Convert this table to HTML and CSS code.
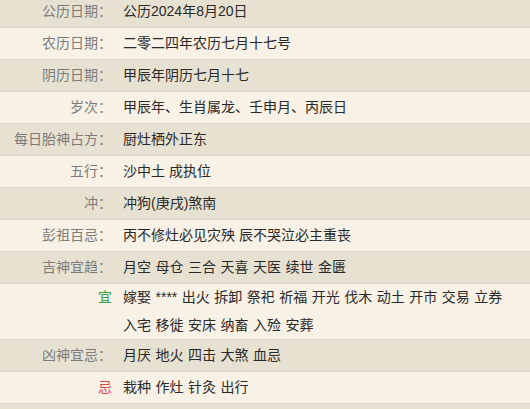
FILE: index.html
```html
<!DOCTYPE html>
<html lang="zh-CN">
<head>
<meta charset="utf-8">
<title>黄历</title>
<link rel="stylesheet" href="styles.css">
</head>
<body>
<div class="almanac">
  <div class="row dark"><div class="label">公历日期：</div><div class="value">公历2024年8月20日</div></div>
  <div class="row light"><div class="label">农历日期：</div><div class="value">二零二四年农历七月十七号</div></div>
  <div class="row dark"><div class="label">阴历日期：</div><div class="value">甲辰年阴历七月十七</div></div>
  <div class="row light"><div class="label">岁次：</div><div class="value">甲辰年、生肖属龙、壬申月、丙辰日</div></div>
  <div class="row dark"><div class="label">每日胎神占方：</div><div class="value">厨灶栖外正东</div></div>
  <div class="row light"><div class="label">五行：</div><div class="value">沙中土 成执位</div></div>
  <div class="row dark"><div class="label">冲：</div><div class="value">冲狗(庚戌)煞南</div></div>
  <div class="row light"><div class="label">彭祖百忌：</div><div class="value">丙不修灶必见灾殃 辰不哭泣必主重丧</div></div>
  <div class="row dark"><div class="label">吉神宜趋：</div><div class="value items"><span>月空</span><span>母仓</span><span>三合</span><span>天喜</span><span>天医</span><span>续世</span><span>金匮</span></div></div>
  <div class="row light multi"><div class="label good">宜</div><div class="value items"><span>嫁娶</span><span>****</span><span>出火</span><span>拆卸</span><span>祭祀</span><span>祈福</span><span>开光</span><span>伐木</span><span>动土</span><span>开市</span><span>交易</span><span>立券</span><span>入宅</span><span>移徙</span><span>安床</span><span>纳畜</span><span>入殓</span><span>安葬</span></div></div>
  <div class="row dark"><div class="label">凶神宜忌：</div><div class="value items"><span>月厌</span><span>地火</span><span>四击</span><span>大煞</span><span>血忌</span></div></div>
  <div class="row light"><div class="label bad">忌</div><div class="value items"><span>栽种</span><span>作灶</span><span>针灸</span><span>出行</span></div></div>
</div>
</body>
</html>
```

FILE: styles.css
```css
html, body {
  margin: 0;
  padding: 0;
}

body {
  background: #e7e1d1;
  font-family: "Liberation Sans", "Noto Sans CJK SC", sans-serif;
  font-size: 14px;
  color: #2a2a2a;
}

.almanac {
  margin-top: -4px;
}

.row {
  display: grid;
  grid-template-columns: 112px 1fr;
  column-gap: 11px;
  align-items: start;
  padding: 5px 10px 5px 0;
  line-height: 21px;
  border-bottom: 1px solid #ddd7c7;
}

.row.dark {
  background: #e7e1d1;
}

.row.light {
  background: #f7f1e6;
}

.row.multi {
  padding-top: 0;
  padding-bottom: 0;
  line-height: 27.5px;
}

.label {
  text-align: right;
  color: #7c7c7c;
  white-space: nowrap;
}

.label.good {
  color: #3b9e3b;
}

.label.bad {
  color: #d94d4f;
}

.value {
  color: #2a2a2a;
}

.items {
  display: flex;
  flex-wrap: wrap;
  column-gap: 4.5px;
}
```
